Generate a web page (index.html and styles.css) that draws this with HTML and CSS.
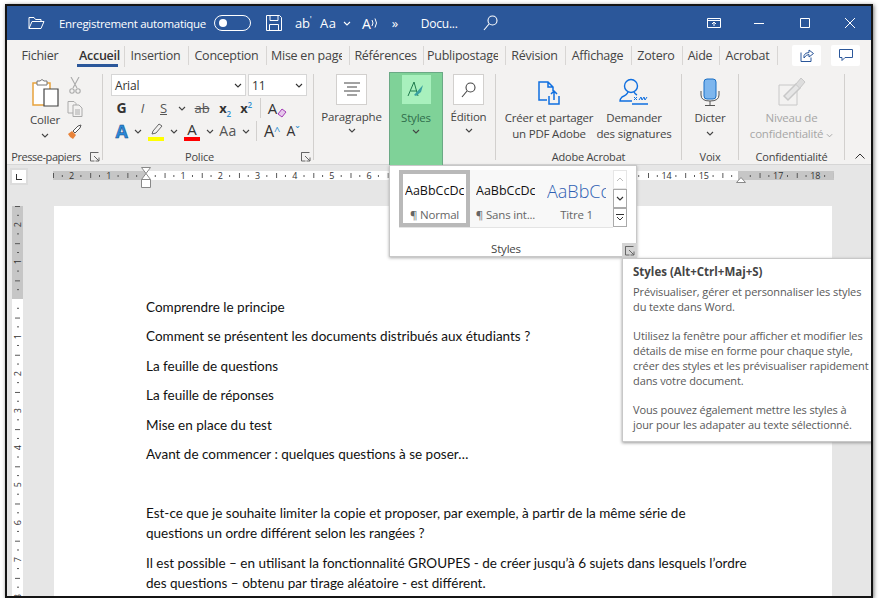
FILE: index.html
```html
<!DOCTYPE html>
<html lang="fr">

<head>
  <meta charset="UTF-8">
  <title>Document - Word</title>
  <link rel="stylesheet" href="styles.css">
</head>

<body>
  <svg class="defs" width="0" height="0">
    <symbol id="chev" viewBox="0 0 8 5"><path d="M1 1l3 3 3-3" fill="none" stroke="currentColor" stroke-width="1.1"/></symbol>
    <symbol id="launch" viewBox="0 0 10 10"><path d="M.5 6V.5h8M.5 .5v8.500h4M4 4l5 5M9 5.500V9H5.500" fill="none" stroke="#666" stroke-width="1"/></symbol>
  </svg>

  <div class="window">
    <!-- title bar -->
    <div class="titlebar">
      <svg class="t-folder" width="17" height="14" viewBox="0 0 17 14" fill="none" stroke="#fff"><path d="M1 12.500V1.500h5l1.500 2H13v2M1 12.500h12l3-7H4z"/></svg>
      <span class="t-auto">Enregistrement automatique</span>
      <span class="toggle"><i></i></span>
      <svg class="t-save" width="16" height="16" viewBox="0 0 16 16" fill="none" stroke="#fff"><path d="M.5 .5h13l2 2v13H.5zM4 .5v5h8v-5M3.500 15.500v-6h9v6"/></svg>
      <span class="t-ab">ab<sup>'</sup></span>
      <span class="t-aa">Aa</span>
      <svg class="t-chev" width="8" height="5"><use href="#chev"/></svg>
      <span class="t-read">A<svg width="8" height="12" viewBox="0 0 8 12" fill="none" stroke="#fff"><path d="M1 3q2 3 0 6M4 1.500q3 4.500 0 9"/></svg></span>
      <span class="t-more">»</span>
      <span class="t-doc">Docu...</span>
      <svg class="t-search" width="15" height="16" viewBox="0 0 15 16" fill="none" stroke="#fff" stroke-width="1.1"><circle cx="9.500" cy="5.500" r="4.500"/><path d="M6 9l-5 6"/></svg>
      <svg class="t-display" width="14" height="10" viewBox="0 0 14 10" fill="none" stroke="#fff"><path d="M.5 .5h13v9H.5zM.5 2.500h13M7 8V4M5 6l2-2 2 2"/></svg>
      <svg class="t-min" width="10" height="10" viewBox="0 0 10 10" stroke="#fff"><path d="M0 5.500h10"/></svg>
      <svg class="t-max" width="10" height="10" viewBox="0 0 10 10" fill="none" stroke="#fff"><path d="M.5 .5h9v9h-9z"/></svg>
      <svg class="t-close" width="10" height="10" viewBox="0 0 10 10" stroke="#fff"><path d="M0 0l10 10M10 0L0 10"/></svg>
    </div>

    <!-- tabs -->
    <div class="tabs">
      <div class="tab">Fichier</div>
      <div class="tab active">Accueil</div>
      <div class="tab sep">Insertion</div>
      <div class="tab sep">Conception</div>
      <div class="tab sep"><span class="cut c-mise">Mise en page</span></div>
      <div class="tab sep">Références</div>
      <div class="tab sep"><span class="cut c-publi">Publipostage</span></div>
      <div class="tab sep">Révision</div>
      <div class="tab sep">Affichage</div>
      <div class="tab sep">Zotero</div>
      <div class="tab sep">Aide</div>
      <div class="tab sep">Acrobat</div>
      <div class="tab-btn">
        <svg width="14" height="14" viewBox="0 0 14 14" fill="none" stroke="#2b579a"><path d="M1 4.500v9h10v-4M4 10V7.500q1-3 5-3V2l4.500 3.500L9 9V6.500q-3 0-5 3.500"/></svg>
      </div>
      <div class="tab-btn">
        <svg width="14" height="13" viewBox="0 0 14 13" fill="none" stroke="#2b579a"><path d="M.5 .5h13v8H6l-3 3v-3H.5z"/></svg>
      </div>
    </div>

    <!-- ribbon -->
    <div class="ribbon">
      <div class="group g-clip">
        <div class="group-body clip-body">
          <div class="big paste">
            <svg width="30" height="29" viewBox="0 0 30 29" fill="none">
              <path d="M3 5h17v22H3z" fill="#fff" stroke="#e8a33d" stroke-width="1.500"/>
              <path d="M7 5V3h3q2-3 4 0h3v4H7z" fill="#fff" stroke="#777"/>
              <path d="M14 11h14v17H14z" fill="#fff" stroke="#444" stroke-width="1.200"/>
            </svg>
            <span class="big-text">Coller</span>
            <svg class="chev" width="8" height="5"><use href="#chev"/></svg>
          </div>
          <div class="clip-tools">
            <svg width="12" height="17" viewBox="0 0 12 17" fill="none" stroke="#aaa" stroke-width="1.100"><path d="M2 0l6 11M10 0L4 11"/><circle cx="3" cy="14" r="2.200"/><circle cx="9" cy="14" r="2.200"/></svg>
            <svg width="16" height="16" viewBox="0 0 16 16" fill="#f3f2f1" stroke="#aaa"><path d="M1 .5h6l2 2V12H1z"/><path d="M6 4h6l3 3v8.500H6zM8 9h5M8 11h5M8 13h5"/></svg>
            <svg width="16" height="16" viewBox="0 0 16 16"><path d="M1 10l4-3 4 4-3 4q-3-1-5-5z" fill="#e8833a"/><path d="M6 7l5-5 3-1-1 3-5 5z" fill="#fff" stroke="#555"/></svg>
          </div>
        </div>
        <div class="group-label shift tight">Presse-papiers<svg class="launch" width="10" height="10"><use href="#launch"/></svg></div>
      </div>

      <div class="group g-font">
        <div class="group-body font-body">
          <div class="font-boxes">
            <div class="combo c-font">Arial<svg width="8" height="5"><use href="#chev"/></svg></div>
            <div class="combo c-size">11<svg width="8" height="5"><use href="#chev"/></svg></div>
          </div>
          <div class="font-row row-a">
            <b class="fmt big-g">G</b>
            <i class="fmt light">I</i>
            <u class="fmt light">S</u>
            <svg class="chev" width="8" height="5"><use href="#chev"/></svg>
            <s class="fmt light">ab</s>
            <span class="fmt"><b>x</b><sub class="blue-sub">2</sub></span>
            <span class="fmt"><b>x</b><sup class="blue-sub">2</sup></span>
            <span class="vsep"></span>
            <span class="fmt erase">A<svg width="10" height="10" viewBox="0 0 10 10"><path d="M1 6l4-5 4 3-4 5z" fill="#e6c7ec" stroke="#a33cb5"/></svg></span>
          </div>
          <div class="font-row row-b">
            <span class="fmt a-effect">A</span>
            <svg class="chev" width="8" height="5"><use href="#chev"/></svg>
            <span class="swatch yellow"><svg width="14" height="12" viewBox="0 0 14 12" fill="none" stroke="#666"><path d="M3 11l1-3 6-7 3 2-6 7z"/></svg></span>
            <svg class="chev" width="8" height="5"><use href="#chev"/></svg>
            <span class="swatch red">A</span>
            <svg class="chev" width="8" height="5"><use href="#chev"/></svg>
            <span class="fmt light aa">Aa</span>
            <svg class="chev" width="8" height="5"><use href="#chev"/></svg>
            <span class="vsep"></span>
            <span class="fmt grow">A<em>^</em></span>
            <span class="fmt grow small">A<em>ˇ</em></span>
          </div>
        </div>
        <div class="group-label shift">Police<svg class="launch" width="10" height="10"><use href="#launch"/></svg></div>
      </div>

      <div class="group g-styles">
        <div class="style-item i-para">
          <div class="icon-box">
            <svg width="16" height="15" viewBox="0 0 16 15" stroke="#444"><path d="M0 1h16M3 5h10M0 9h16M3 13h10"/></svg>
          </div>
          <span class="item-text">Paragraphe</span>
          <svg class="chev" width="8" height="5"><use href="#chev"/></svg>
        </div>
        <div class="style-item i-styles">
          <div class="icon-box hot">
            <svg width="18" height="17" viewBox="0 0 18 17" fill="none"><path d="M1 15L7 1l4 14M3.500 10h6" stroke="#1f7a4d"/><path d="M7 14l9-10-2 7-5 4z" fill="#3aa0a0"/></svg>
          </div>
          <span class="item-text">Styles</span>
          <svg class="chev" width="8" height="5"><use href="#chev"/></svg>
        </div>
        <div class="style-item i-edit">
          <div class="icon-box">
            <svg width="15" height="16" viewBox="0 0 15 16" fill="none" stroke="#444" stroke-width="1.100"><circle cx="9.500" cy="5.500" r="4.500"/><path d="M6 9l-5 6"/></svg>
          </div>
          <span class="item-text">Édition</span>
          <svg class="chev" width="8" height="5"><use href="#chev"/></svg>
        </div>
      </div>

      <div class="group g-acrobat">
        <div class="group-body acrobat-body">
          <div class="big a-pdf">
            <svg width="22" height="24" viewBox="0 0 22 24" fill="none" stroke="#0f6fe0" stroke-width="1.500"><path d="M9 19H1V1h9l5 5v4M10 1v5h5M11 15v8h10v-8M16 19v-9M13 13l3-3 3 3"/></svg>
            <span class="big-text">Créer et partager<br>un PDF Adobe</span>
          </div>
          <div class="big a-sign">
            <svg width="30" height="27" viewBox="0 0 30 27" fill="none" stroke="#0f6fe0" stroke-width="1.400"><circle cx="12" cy="8" r="6.500"/><path d="M9 14q-1 3-6 5-2 2-2 4h12M15 14q1 2 3 3M13 26h16"/><path d="M15 19l3 3M18 19l-3 3M20 22l2-3 1 3 2-3 1 3 2-3" stroke-width="1"/></svg>
            <span class="big-text">Demander<br>des signatures</span>
          </div>
        </div>
        <div class="group-label">Adobe Acrobat</div>
      </div>

      <div class="group g-voice">
        <div class="group-body">
          <div class="big a-mic">
            <svg width="20" height="28" viewBox="0 0 20 28"><rect x="4" y="1" width="12" height="20" rx="3" fill="#7db6ee" stroke="#1a6fc4"/><path d="M1 13v4q0 6 9 6t9-6v-4M10 23v4M5 27.500h10" fill="none" stroke="#555"/></svg>
            <span class="big-text">Dicter</span>
            <svg class="chev" width="8" height="5"><use href="#chev"/></svg>
          </div>
        </div>
        <div class="group-label">Voix</div>
      </div>

      <div class="group g-sens">
        <div class="group-body">
          <div class="big muted">
            <svg width="28" height="29" viewBox="0 0 28 29" fill="none" stroke="#c8c8c8"><path d="M1 8h18v20H1z"/><path d="M6 19L18 7l4 4-12 12z" fill="#e6e6e6" stroke-width="1.500"/><path d="M18 7l5-6 4 4-5 6" fill="#ddd"/></svg>
            <span class="big-text">Niveau de<br>confidentialité <svg width="7" height="5"><use href="#chev"/></svg></span>
          </div>
        </div>
        <div class="group-label">Confidentialité</div>
      </div>

      <svg class="collapse" width="10" height="6" viewBox="0 0 10 6" fill="none" stroke="#333"><path d="M.5 5.500L5 1l4.500 4.500"/></svg>
    </div>

    <!-- horizontal ruler -->
    <div class="ruler-row">
      <div class="tab-stop"><span></span></div>
      <div class="h-ruler">
        <span>2</span><span>1</span><span></span><span>1</span><span>2</span><span>3</span><span>4</span><span>5</span><span>6</span><span>7</span><span>8</span><span>9</span><span>10</span><span>11</span><span>12</span><span>13</span><span>14</span><span>15</span><span></span><span>17</span><span>18</span>
        <svg class="indent-left" width="10" height="21" viewBox="0 0 10 21" fill="#fff" stroke="#888"><path d="M.5 .5h9L5 6.500zM5 6.500L9.500 12.500v8h-9v-8zM.5 12.500h9"/></svg>
        <svg class="indent-right" width="10" height="6" viewBox="0 0 10 6" fill="#fff" stroke="#888"><path d="M5 .5l4.500 5H.5z"/></svg>
      </div>
    </div>

    <!-- document -->
    <div class="workspace">
      <div class="v-ruler">
        <span>2</span><span>1</span><span></span><span>1</span><span>2</span><span>3</span><span>4</span><span>5</span><span>6</span><span>7</span><span>8</span>
      </div>
      <div class="page">
        <p>Comprendre le principe</p>
        <p>Comment se présentent les documents distribués aux étudiants ?</p>
        <p>La feuille de questions</p>
        <p>La feuille de réponses</p>
        <p>Mise en place du test</p>
        <p>Avant de commencer : quelques questions à se poser…</p>
        <p>&nbsp;</p>
        <p>Est-ce que je souhaite limiter la copie et proposer, par exemple, à partir de la même série de<br>questions un ordre différent selon les rangées ?</p>
        <p>Il est possible – en utilisant la fonctionnalité GROUPES - de créer jusqu’à 6 sujets dans lesquels l’ordre<br>des questions – obtenu par tirage aléatoire - est différent.</p>
      </div>
    </div>

    <!-- styles gallery dropdown -->
    <div class="gallery">
      <div class="gallery-top">
        <div class="swatches">
          <div class="style-card selected"><span class="sample">AaBbCcDc</span><span class="style-name">¶ Normal</span></div>
          <div class="style-card"><span class="sample">AaBbCcDc</span><span class="style-name">¶ Sans int...</span></div>
          <div class="style-card"><span class="sample title1">AaBbCc</span><span class="style-name">Titre 1</span></div>
        </div>
        <div class="scroller">
          <div class="off"><svg width="8" height="5" viewBox="0 0 8 5" fill="none" stroke="#bbb"><path d="M1 4l3-3 3 3"/></svg></div>
          <div><svg width="8" height="5"><use href="#chev"/></svg></div>
          <div><svg width="8" height="7" viewBox="0 0 8 7" fill="none" stroke="#333"><path d="M0 .5h8M1 3l3 3 3-3"/></svg></div>
        </div>
      </div>
      <div class="gallery-label">Styles</div>
      <div class="gallery-launch"><svg width="10" height="10"><use href="#launch"/></svg></div>
    </div>

    <!-- tooltip -->
    <div class="tip">
      <h4>Styles (Alt+Ctrl+Maj+S)</h4>
      <p>Prévisualiser, gérer et personnaliser les styles<br>du texte dans Word.</p>
      <p>Utilisez la fenêtre pour afficher et modifier les<br>détails de mise en forme pour chaque style,<br>créer des styles et les prévisualiser rapidement<br>dans votre document.</p>
      <p>Vous pouvez également mettre les styles à<br>jour pour les adapater au texte sélectionné.</p>
    </div>
  </div>
</body>

</html>
```

FILE: styles.css
```css
body {
  margin: 0;
  background: #fff;
  font-family: "Open Sans", "Noto Sans", sans-serif;
  font-size: 11.5px;
  letter-spacing: -0.2px;
  color: #444;
}

.defs {
  position: absolute;
}

.window {
  position: relative;
  display: flex;
  flex-direction: column;
  box-sizing: border-box;
  width: 868px;
  height: 594px;
  margin: 4px 0 0 5px;
  border: 2px solid #141414;
  box-shadow: 1px 1px 4px #777;
  overflow: hidden;
  background: #e6e6e6;
}

/* title bar */
.titlebar {
  display: flex;
  align-items: center;
  flex: 0 0 34px;
  background: #2b579a;
  color: #fff;
  font-size: 12px;
}

.t-folder { margin-left: 21px; }
.t-auto { margin-left: 14px; width: 148px; font-size: 11.5px; letter-spacing: -0.3px; white-space: nowrap; }
.toggle {
  display: block;
  box-sizing: border-box;
  width: 37px;
  height: 16px;
  margin-left: 7px;
  padding: 3px 4px;
  border: 1px solid #fff;
  border-radius: 8px;
}
.toggle i {
  display: block;
  width: 8px;
  height: 8px;
  border-radius: 50%;
  background: #fff;
}
.t-save { margin-left: 15px; }
.t-ab { margin-left: 13px; width: 18px; font-size: 13px; }
.t-ab sup { font-size: 9px; line-height: 0; }
.t-aa { margin-left: 7px; width: 20px; font-size: 13px; letter-spacing: 0.5px; }
.t-chev { margin-left: 3px; }
.t-read { display: flex; margin-left: 11px; font-size: 14px; align-items: center; }
.t-more { margin-left: 13px; width: 12px; font-size: 13px; }
.t-doc { margin-left: 17px; width: 45px; }
.t-search { margin-left: 17px; }
.t-display { margin-left: 209px; }
.t-min { margin-left: 33px; }
.t-max { margin-left: 36px; }
.t-close { margin-left: 35px; }

/* tabs */
.tabs {
  display: grid;
  grid-template-columns: 63px 54px 64px 78px 83px 74px 82px 60px 66px 51px 37px 58px 29px 29px;
  grid-template-rows: 30px;
  align-items: center;
  flex: 0 0 30px;
  padding-left: 1px;
  background: #f3f2f1;
  font-size: 12.500px;
  letter-spacing: -0.25px;
}

.tab {
  box-sizing: border-box;
  height: 19px;
  padding: 0 5px 0 3px;
  line-height: 19px;
  text-align: center;
  white-space: nowrap;
  overflow: hidden;
  border-right: 1px solid #d8d6d4;
}

.tab:first-child {
  padding-left: 6px;
  border-right: none;
}

.tab.active {
  align-self: start;
  height: 21px;
  margin-top: 6px;
  padding: 0 2px 0 6px;
  font-weight: 600;
  color: #333;
  background: linear-gradient(#2b579a, #2b579a) center bottom / 41px 3px no-repeat;
}

.cut {
  display: block;
  overflow: hidden;
  text-align: left;
}

.c-mise { width: 71px; margin-left: 1px; }
.c-publi { width: 71px; }

.tab-btn {
  display: flex;
  align-items: center;
  justify-content: center;
  width: 29px;
  height: 21px;
  background: #fff;
  border-radius: 2px;
}

.tab-btn:nth-child(13) { margin-left: 14px; }
.tab-btn:nth-child(14) { margin-left: 24px; }

/* ribbon */
.ribbon {
  position: relative;
  display: flex;
  flex: 0 0 95px;
  background: #f3f2f1;
  border-bottom: 1px solid #d6d6d6;
  box-sizing: border-box;
}

.group {
  display: flex;
  flex-direction: column;
  box-sizing: border-box;
  height: 86px;
  margin-top: 4px;
  border-right: 1px solid #d2d0ce;
}

.g-clip { width: 96px; }
.g-font { width: 211px; }
.g-styles { width: 182px; flex-direction: row; }
.g-acrobat { width: 186px; }
.g-voice { width: 57px; }
.g-sens { width: 106px; }

.group-body {
  display: flex;
  flex: 1;
  min-height: 0;
  justify-content: center;
}

.group-label {
  position: relative;
  height: 14px;
  margin-bottom: -4px;
  line-height: 14px;
  text-align: center;
  white-space: nowrap;
  font-size: 11px;
}

.group-label.shift {
  padding-right: 17px;
}

.group-label.tight {
  letter-spacing: -0.45px;
}

.launch {
  position: absolute;
  right: 2px;
  top: 2px;
}

.big {
  display: flex;
  flex-direction: column;
  align-items: center;
  white-space: nowrap;
}

.big-text {
  line-height: 16px;
  text-align: center;
}

.chev {
  display: block;
  color: #444;
}

.big .chev {
  margin-top: 5px;
}

/* clipboard */
.clip-body {
  justify-content: flex-start;
}

.big.paste {
  width: 40px;
  margin-left: 18px;
}

.paste svg:first-child {
  margin-top: 4px;
}

.paste .big-text {
  margin-top: 3px;
}

.clip-tools {
  display: flex;
  flex-direction: column;
  align-items: center;
  gap: 7px;
  margin: 3px 0 0 2px;
}

/* font */
.font-body {
  display: block;
  padding-left: 8px;
}

.font-boxes {
  display: flex;
  gap: 2px;
  height: 22px;
}

.combo {
  display: flex;
  align-items: center;
  justify-content: space-between;
  box-sizing: border-box;
  padding: 0 3px;
  background: #fff;
  border: 1px solid #d6d6d6;
  font-size: 12px;
  color: #333;
}

.c-font { width: 135px; }
.c-size { width: 59px; }

.font-row {
  display: grid;
  align-items: center;
  justify-items: center;
  height: 22px;
  margin-top: 1px;
}

.row-a {
  grid-template-columns: 21px 21px 21px 16px 24px 22px 20px 9px 25px;
}

.row-b {
  grid-template-columns: 21px 12px 24px 12px 24px 12px 24px 12px 9px 22px 20px;
}

.fmt {
  font-size: 13px;
  line-height: 20px;
  color: #333;
}

.fmt.big-g {
  font-size: 14px;
}

.fmt.light {
  color: #555;
  font-weight: 400;
}

.blue-sub {
  font-size: 8px;
  line-height: 0;
  color: #2e8fd0;
  font-weight: 600;
}

.vsep {
  width: 1px;
  height: 20px;
  background: #d2d0ce;
}

.erase {
  display: flex;
  align-items: flex-end;
  font-size: 15px;
}

.a-effect {
  font-size: 18px;
  font-weight: 700;
  color: #2b88d8;
  -webkit-text-stroke: 0.5px #114a86;
}

.swatch {
  display: block;
  box-sizing: border-box;
  width: 16px;
  height: 19px;
  line-height: 14px;
  text-align: center;
  font-size: 15px;
  color: #333;
}

.swatch.yellow { border-bottom: 4px solid #ffff00; }
.swatch.red { border-bottom: 4px solid #ff0000; }

.aa { font-size: 14px; letter-spacing: 0.5px; }

.grow {
  font-size: 16px;
}

.grow.small {
  font-size: 14px;
}

.grow em {
  font-style: normal;
  font-size: 11px;
  vertical-align: top;
  color: #2e8fd0;
}

/* paragraph / styles / editing */
.style-item {
  display: flex;
  flex-direction: column;
  align-items: center;
  box-sizing: border-box;
}

.i-para { width: 75px; }
.i-edit { width: 51px; }

.i-styles {
  width: 54px;
  height: 93px;
  margin-top: -2px;
  padding-top: 2px;
  background: #7fd298;
  border-top: 1px solid #6aa985;
  border-left: 1px solid #6aa985;
  border-right: 1px solid #6aa985;
  z-index: 1;
}

.i-styles .item-text {
  color: #2f6e4c;
}

.icon-box {
  display: flex;
  align-items: center;
  justify-content: center;
  box-sizing: border-box;
  width: 31px;
  height: 31px;
  background: #fff;
  border: 1px solid #d2d0ce;
}

.icon-box.hot {
  width: 29px;
  height: 29px;
  background: #a8f0bd;
  border: none;
}

.item-text {
  margin-top: 4px;
  line-height: 16px;
  font-size: 11.5px;
}

.i-styles .item-text {
  margin-top: 6px;
}

.style-item .chev {
  margin-top: 3px;
}

/* acrobat, voice, confidentiality */
.acrobat-body {
  justify-content: flex-start;
}

.a-pdf { width: 106px; }
.a-sign { width: 64px; }

.a-pdf svg {
  margin-top: 7px;
}

.a-sign svg {
  margin-top: 4px;
}

.big .big-text {
  margin-top: 5px;
}

.a-mic svg:first-child {
  margin-top: 4px;
}

.a-mic .big-text {
  margin-top: 4px;
}

.muted svg:first-child {
  margin-top: 3px;
}

.big.muted .big-text {
  margin-top: 4px;
  color: #a6a6a6;
}

.muted svg {
  color: #a6a6a6;
}

.collapse {
  position: absolute;
  right: 6px;
  bottom: 5px;
}

/* rulers */
.ruler-row {
  display: flex;
  flex: 0 0 25px;
  background: #e6e6e6;
}

.tab-stop {
  display: flex;
  align-items: center;
  justify-content: center;
  box-sizing: border-box;
  width: 18px;
  height: 17px;
  margin: 3px 0 0 3px;
  background: #fff;
  border: 2px solid #dcdcdc;
}

.tab-stop span {
  display: block;
  width: 5px;
  height: 5px;
  border-left: 1px solid #333;
  border-bottom: 1px solid #333;
}

.h-ruler {
  position: relative;
  display: flex;
  width: 781px;
  height: 9px;
  margin: 6px 0 0 25px;
  background:
    linear-gradient(90deg, #555 1px, transparent 1px) 0 center / 37.2px 5px repeat-x,
    linear-gradient(90deg, transparent 9px, #555 9px, #555 10.2px, transparent 10.2px) 0 center / 18.6px 2px repeat-x,
    linear-gradient(90deg, #c6c6c6 93px, #fff 93px, #fff 685px, #c6c6c6 685px);
}

.h-ruler span {
  flex: 0 0 37.2px;
  text-align: center;
  font-size: 9px;
  line-height: 9px;
  color: #333;
  letter-spacing: 0;
}

.indent-left {
  position: absolute;
  left: 88px;
  top: -4px;
}

.indent-right {
  position: absolute;
  left: 683px;
  top: 6px;
}

.workspace {
  display: flex;
  flex: 1;
  min-height: 0;
  padding-top: 16px;
}

.v-ruler {
  display: flex;
  flex-direction: column;
  flex: 0 0 11px;
  min-width: 0;
  height: 410px;
  margin-left: 5px;
  background:
    linear-gradient(#555 1px, transparent 1px) center 0 / 5px 37.2px repeat-y,
    linear-gradient(transparent 9px, #555 9px, #555 10.2px, transparent 10.2px) center 0 / 2px 18.6px repeat-y,
    linear-gradient(#c6c6c6 93px, #fff 93px);
}

.v-ruler span {
  display: flex;
  align-items: center;
  justify-content: center;
  flex: 0 0 37.2px;
  font-size: 9px;
  line-height: 10px;
  letter-spacing: 0;
  color: #333;
  writing-mode: vertical-rl;
  transform: rotate(180deg);
}

.page {
  box-sizing: border-box;
  width: 778px;
  margin-left: 31px;
  padding: 90.700px 70px 0 92px;
  background: #fff;
  font-family: Lato, "Open Sans", sans-serif;
  font-size: 13.500px;
  letter-spacing: 0;
  color: #111;
}

.page p {
  margin: 0 0 9.500px;
  line-height: 20px;
}

/* styles gallery */
.gallery {
  position: absolute;
  left: 382px;
  top: 159px;
  box-sizing: border-box;
  width: 248px;
  height: 92px;
  padding: 4px 9px 0;
  background: #fff;
  border: 1px solid #c8c8c8;
  box-shadow: 0 1px 3px #aaa;
}

.gallery-top {
  display: flex;
}

.swatches {
  display: flex;
  width: 214px;
  height: 57px;
  background: #f8f8f8;
  border-bottom: 1px solid #e4e4e4;
}

.style-card {
  display: flex;
  flex-direction: column;
  align-items: center;
  box-sizing: border-box;
  flex: 0 0 71px;
  padding: 0 5px;
  overflow: hidden;
  white-space: nowrap;
}

.style-card.selected {
  background: #fff;
  border: 4px solid #b9b9b9;
  padding: 0 2px;
}

.sample {
  width: 59px;
  height: 31px;
  margin-top: 6px;
  line-height: 30px;
  overflow: hidden;
  font-size: 12.500px;
  letter-spacing: 0;
  color: #111;
}

.style-card.selected .sample {
  margin-top: 2px;
}

.sample.title1 {
  font-size: 18px;
  color: #2f5fb3;
  font-weight: 300;
}

.style-name {
  font-size: 11.500px;
  line-height: 16px;
  color: #666;
}

.scroller {
  display: flex;
  flex-direction: column;
}

.scroller div {
  display: flex;
  align-items: center;
  justify-content: center;
  box-sizing: border-box;
  width: 14px;
  height: 19px;
  background: #fff;
  border: 1px solid #aaa;
  color: #333;
}

.scroller div.off {
  border-color: #e6e6e6;
}

.gallery-label {
  margin-top: 13px;
  padding-right: 14px;
  line-height: 16px;
  text-align: center;
}

.gallery-launch {
  position: absolute;
  right: -1px;
  bottom: -2px;
  display: flex;
  align-items: center;
  justify-content: center;
  width: 15px;
  height: 15px;
  background: #d4d4d4;
}

/* tooltip */
.tip {
  position: absolute;
  left: 615px;
  top: 252px;
  box-sizing: border-box;
  width: 252px;
  height: 184px;
  padding: 5px 0 0 10px;
  background: #fff;
  border: 1px solid #c8c8c8;
  box-shadow: 0 1px 3px #999;
  font-size: 11px;
  letter-spacing: -0.1px;
  color: #595959;
  white-space: nowrap;
}

.tip h4 {
  margin: 0 0 5px;
  line-height: 15px;
  font-size: 11.500px;
  font-weight: 700;
  letter-spacing: 0;
  color: #444;
}

.tip p {
  margin: 0 0 14px;
  line-height: 15px;
}
```
